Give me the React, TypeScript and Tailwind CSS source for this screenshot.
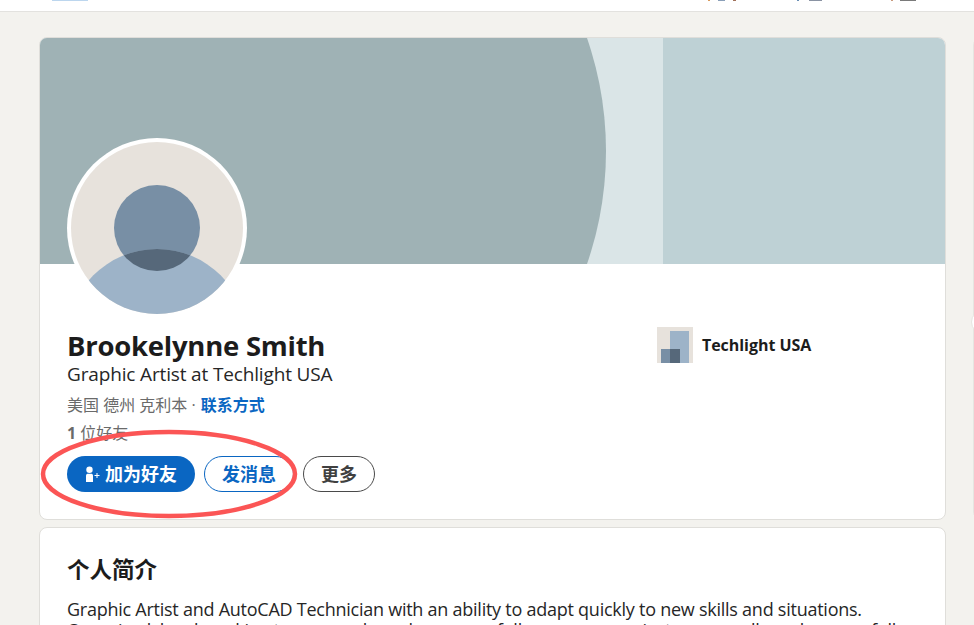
const sans = "font-['Open_Sans','Noto_Sans_CJK_SC',sans-serif]"

function Cover() {
  return (
    <div className="h-[226px] bg-[#bed1d5] relative overflow-hidden">
      <svg width="906" height="226" viewBox="0 0 906 226" className="block">
        <rect x="0" y="0" width="623" height="226" fill="#dae5e7" />
        <circle cx="220.5" cy="113" r="345.5" fill="#9fb2b5" />
      </svg>
    </div>
  )
}

function Avatar() {
  return (
    <svg width="180" height="180" viewBox="0 0 180 180" className="block">
      <defs>
        <clipPath id="avatar-clip">
          <circle cx="90" cy="90" r="86" />
        </clipPath>
        <clipPath id="head-clip">
          <circle cx="90" cy="90" r="43" />
        </clipPath>
      </defs>
      <circle cx="90" cy="90" r="90" fill="#ffffff" />
      <g clipPath="url(#avatar-clip)">
        <rect width="180" height="180" fill="#e7e2dc" />
        <circle cx="90" cy="90" r="43" fill="#788fa5" />
        <circle cx="90" cy="201" r="90" fill="#9db3c8" />
        <circle cx="90" cy="201" r="90" fill="#56687a" clipPath="url(#head-clip)" />
      </g>
    </svg>
  )
}

function CompanyLogo() {
  return (
    <svg width="36" height="36" viewBox="0 0 36 36" className="block shrink-0">
      <rect width="36" height="36" fill="#e7e2dc" />
      <rect x="13" y="4" width="19" height="32" fill="#9db3c8" />
      <rect x="4" y="22" width="19" height="14" fill="#788fa5" />
      <rect x="13" y="22" width="10" height="14" fill="#56687a" />
    </svg>
  )
}

function AddIcon() {
  return (
    <svg width="16" height="16" viewBox="0 0 16 16" fill="#ffffff" className="block">
      <circle cx="4.500" cy="3.800" r="3.200" />
      <path d="M1 9.500C1 8.300 2 7.800 3 7.800h3C7 7.800 8 8.300 8 9.500V16H1z" />
      <path d="M9.500 9h2V7h1v2h2v1h-2v2h-1v-2h-2z" />
    </svg>
  )
}

export default function App() {
  return (
    <div className={`relative h-[625px] overflow-hidden bg-[#f3f2ee] ${sans}`}>
      <header className="h-3 bg-white border-b border-[#e3e2df]">
        <div className="flex h-[1px]">
          <span className="ml-[52px] w-9 bg-[#bcd6ee]" />
          <span className="ml-[620px] w-[2px] bg-[#d99a5b]" />
          <span className="ml-2 w-[7px] bg-[#8a9fb8]" />
          <span className="ml-2 w-[3px] bg-[#a0705a]" />
          <span className="ml-[61px] w-[2px] bg-[#6b8fb5]" />
          <span className="ml-[10px] w-[13px] bg-[#8a93a3]" />
          <span className="ml-[69px] w-[2px] bg-[#c99a7d]" />
          <span className="ml-[7px] w-4 bg-[#7a7a7a]" />
        </div>
      </header>

      <main className="pl-[39px] pt-[25px] w-[946px] flex flex-col gap-[7px]">
        <section className="relative bg-white rounded-lg border border-[#dfdeda] overflow-hidden h-[483px]">
          <Cover />
          <div className="px-[27px]">
            <div className="-mt-[126px] relative w-[180px]">
              <Avatar />
            </div>
            <div className="flex mt-2">
              <div className="w-[590px]">
                <h1 className="mt-1 text-[27.5px] leading-8 font-bold tracking-[-0.25px] text-[#1c1c1c]">Brookelynne Smith</h1>
                <p className="text-[19px] leading-6 tracking-[-0.15px] text-[#262626]">Graphic Artist at Techlight USA</p>
                <p className="text-[16px] leading-6 mt-[7px] text-[#6a6a6a]">
                  美国 德州 克利本 · <span className="ml-[1px] font-bold text-[#0a66c2]">联系方式</span>
                </p>
                <p className="text-[16px] leading-6 mt-1 text-[#6a6a6a]">
                  <span className="font-bold">1</span> 位好友
                </p>
                <div className="flex gap-[9px] mt-[11px]">
                  <button className="h-9 w-[128px] rounded-full bg-[#0a66c2] text-white text-[18px] font-bold flex items-center justify-center gap-1">
                    <AddIcon />
                    加为好友
                  </button>
                  <button className="h-9 w-[90px] rounded-full border border-[#0a66c2] text-[#0a66c2] text-[18px] font-bold">
                    发消息
                  </button>
                  <button className="h-9 w-[72px] rounded-full border border-[#4a4a4a] text-[#404040] text-[18px] font-bold">
                    更多
                  </button>
                </div>
              </div>
              <div className="flex items-center gap-[9px] h-9 mt-[1px]">
                <CompanyLogo />
                <span className="text-[16px] font-bold tracking-[-0.05px] text-[#1c1c1c]">Techlight USA</span>
              </div>
            </div>
          </div>
        </section>

        <section className="bg-white rounded-lg border border-[#dfdeda] px-[27px] pt-[26px] h-[200px]">
          <h2 className="text-[22.5px] leading-8 font-bold text-[#1c1c1c]">个人简介</h2>
          <p className="mt-[13px] text-[18px] leading-[21px] tracking-[-0.25px] text-[#262626] whitespace-nowrap">
            Graphic Artist and AutoCAD Technician with an ability to adapt quickly to new skills and situations.
            <br />
            Organized, hard-working team member who successfully manages projects personally and successfully.
          </p>
        </section>
      </main>

      {/* next column peeking in at the right edge */}
      <div className="absolute left-[973px] top-[37px] w-10 h-[483px] bg-white rounded-lg border border-[#e6e5e1]" />
      <div className="absolute left-[971px] top-[310px] w-6 h-6 rounded-full bg-white border border-[#e6e5e1]" />

      {/* hand drawn marker around the buttons */}
      <svg width="974" height="625" className="absolute inset-0 pointer-events-none">
        <ellipse cx="169" cy="474" rx="126" ry="42" fill="none" stroke="#fb5555" strokeWidth="4.500" />
      </svg>
    </div>
  )
}
